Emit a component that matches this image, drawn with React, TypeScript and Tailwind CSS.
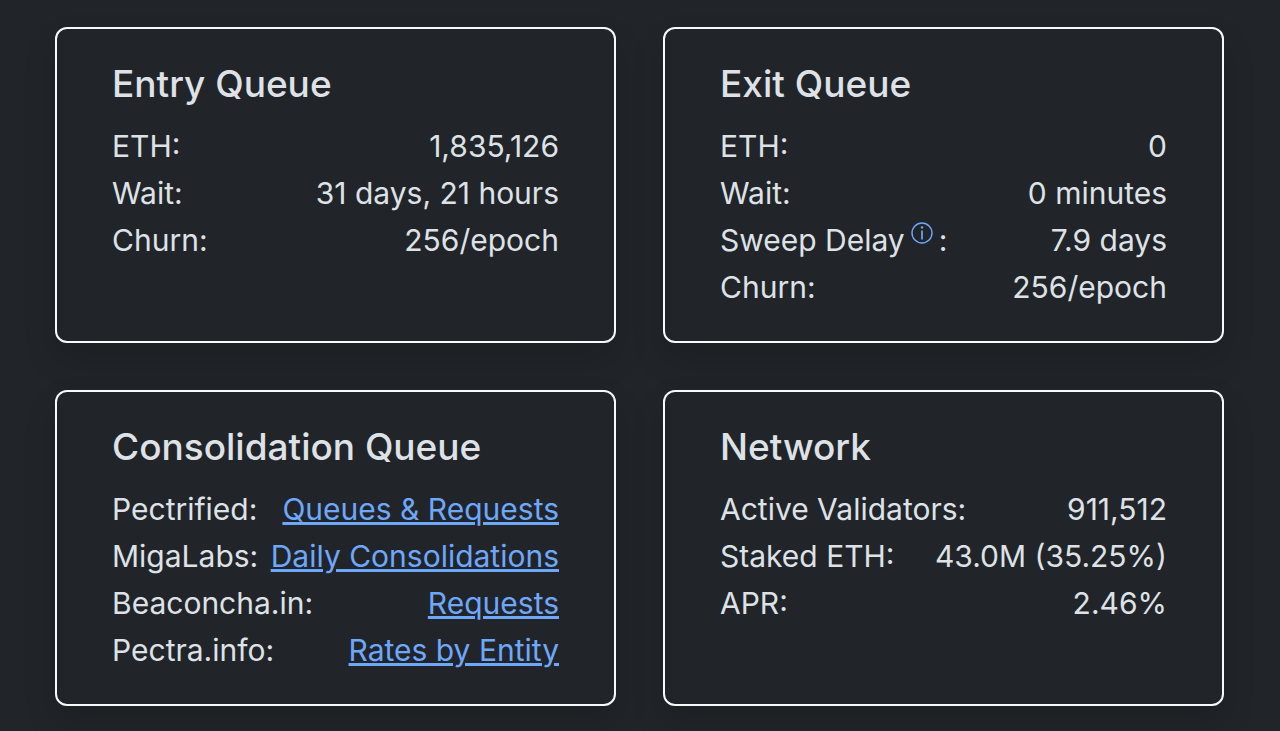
import React from 'react';

interface RowProps {
  label: React.ReactNode;
  children: React.ReactNode;
}

function Row({ label, children }: RowProps) {
  return (
    <div className="flex justify-between">
      <dt>{label}</dt>
      <dd className="text-right">{children}</dd>
    </div>
  );
}

interface QueueCardProps {
  title: string;
  children: React.ReactNode;
}

function QueueCard({ title, children }: QueueCardProps) {
  return (
    <section className="rounded-xl border-2 border-[#f8f9fa] px-[55px] pt-8 pb-[30px] shadow-[0_16px_32px_rgba(0,0,0,0.15)]">
      <h2 className="mb-4 text-[37px] leading-[46px] font-medium">{title}</h2>
      <dl className="text-[30px] leading-[47px]">{children}</dl>
    </section>
  );
}

function QueueLink({ children }: { children: React.ReactNode }) {
  return (
    <a href="#" className="text-[#6ea8fe] underline">
      {children}
    </a>
  );
}

function InfoIcon() {
  return (
    <svg className="size-[22px]" viewBox="0 0 22 22" fill="none" stroke="currentColor" aria-hidden="true">
      <circle cx="11" cy="11" r="10" strokeWidth="1.4" />
      <circle cx="11" cy="5.4" r="1.2" fill="currentColor" stroke="none" />
      <path d="M11 8.4v9" strokeWidth="1.7" />
    </svg>
  );
}

export default function App() {
  return (
    <main className="min-h-screen bg-[#212529] pt-[27px] pr-[56px] pb-6 pl-[55px] font-['Inter','Liberation_Sans',sans-serif] text-[#dee2e6]">
      <div className="grid grid-cols-2 gap-[47px]">
        <QueueCard title="Entry Queue">
          <Row label="ETH:">1,835,126</Row>
          <Row label="Wait:">31 days, 21 hours</Row>
          <Row label="Churn:">256/epoch</Row>
        </QueueCard>

        <QueueCard title="Exit Queue">
          <Row label="ETH:">0</Row>
          <Row label="Wait:">0 minutes</Row>
          <Row
            label={
              <span className="flex gap-1.5">
                Sweep Delay
                <button type="button" aria-label="About sweep delay" className="mt-[5px] self-start text-[#6ea8fe]">
                  <InfoIcon />
                </button>
                :
              </span>
            }
          >
            7.9 days
          </Row>
          <Row label="Churn:">256/epoch</Row>
        </QueueCard>

        <QueueCard title="Consolidation Queue">
          <Row label="Pectrified:">
            <QueueLink>Queues &amp; Requests</QueueLink>
          </Row>
          <Row label="MigaLabs:">
            <QueueLink>Daily Consolidations</QueueLink>
          </Row>
          <Row label="Beaconcha.in:">
            <QueueLink>Requests</QueueLink>
          </Row>
          <Row label="Pectra.info:">
            <QueueLink>Rates by Entity</QueueLink>
          </Row>
        </QueueCard>

        <QueueCard title="Network">
          <Row label="Active Validators:">911,512</Row>
          <Row label="Staked ETH:">43.0M (35.25%)</Row>
          <Row label="APR:">2.46%</Row>
        </QueueCard>
      </div>
    </main>
  );
}
